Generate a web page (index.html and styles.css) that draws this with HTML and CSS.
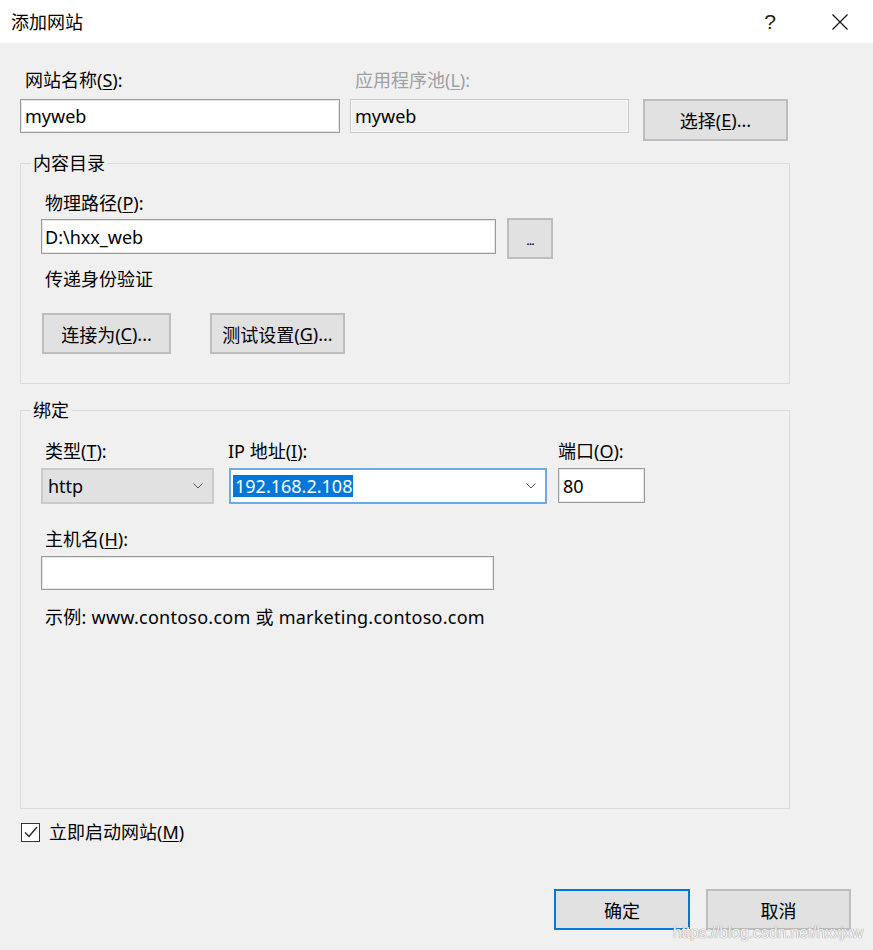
FILE: index.html
```html
<!DOCTYPE html>
<html lang="zh-CN">
<head>
<meta charset="utf-8">
<title>添加网站</title>
<link rel="stylesheet" href="styles.css">
</head>
<body>
<div class="dialog">
  <header class="titlebar">
    <span class="title">添加网站</span>
    <span class="tb-btn help">?</span>
    <span class="tb-btn close">
      <svg width="16" height="16" viewBox="0 0 16 16"><path d="M0.5 0.5L15.5 15.5M15.5 0.5L0.5 15.5" stroke="#111" stroke-width="1.2" fill="none"/></svg>
    </span>
  </header>

  <main class="content">
    <div class="top-grid">
      <label class="lbl lbl-name">网站名称(<u>S</u>):</label>
      <label class="lbl lbl-pool disabled">应用程序池(<u>L</u>):</label>
      <div class="tb w-name">myweb</div>
      <div class="tb readonly w-pool">myweb</div>
      <button class="btn btn-select">选择(<u>E</u>)...</button>
    </div>

    <fieldset class="group group-dir">
      <legend>内容目录</legend>
      <label class="lbl lbl-first">物理路径(<u>P</u>):</label>
      <div class="path-row">
        <div class="tb w-path">D:\hxx_web</div>
        <button class="btn btn-browse">...</button>
      </div>
      <div class="lbl lbl-auth">传递身份验证</div>
      <div class="auth-row">
        <button class="btn btn-connect">连接为(<u>C</u>)...</button>
        <button class="btn btn-test">测试设置(<u>G</u>)...</button>
      </div>
    </fieldset>

    <fieldset class="group group-bind">
      <legend>绑定</legend>
      <div class="bind-grid">
        <label class="lbl">类型(<u>T</u>):</label>
        <label class="lbl lbl-ip">IP 地址(<u>I</u>):</label>
        <label class="lbl lbl-port">端口(<u>O</u>):</label>
        <div class="combo combo-type">
          <span>http</span>
          <svg class="chev" width="10" height="6" viewBox="0 0 10 6"><path d="M0.5 0.5L5 5L9.5 0.5" stroke="#555" stroke-width="1" fill="none"/></svg>
        </div>
        <div class="combo combo-ip">
          <span class="sel">192.168.2.108</span>
          <svg class="chev" width="10" height="6" viewBox="0 0 10 6"><path d="M0.5 0.5L5 5L9.5 0.5" stroke="#555" stroke-width="1" fill="none"/></svg>
        </div>
        <div class="tb w-port">80</div>
      </div>
      <label class="lbl lbl-host">主机名(<u>H</u>):</label>
      <div class="tb w-host"></div>
      <div class="lbl lbl-example">示例: www.contoso.com 或 marketing.contoso.com</div>
    </fieldset>

    <div class="check-row">
      <span class="checkbox">
        <svg width="14" height="12" viewBox="0 0 14 12"><path d="M1 6.5L5 10.5L13 1" stroke="#222" stroke-width="1.3" fill="none"/></svg>
      </span>
      <span class="check-label">立即启动网站(<u>M</u>)</span>
    </div>

    <div class="actions">
      <button class="btn btn-ok">确定</button>
      <button class="btn btn-cancel">取消</button>
    </div>
  </main>

  <div class="watermark">https://blog.csdn.net/hxxjxw</div>
</div>
</body>
</html>
```

FILE: styles.css
```css
* { box-sizing: border-box; }

html, body {
  margin: 0;
  padding: 0;
}

body {
  width: 873px;
  height: 950px;
  overflow: hidden;
  background: #f0f0f0;
  color: #000;
  font-family: "Noto Sans", "Noto Sans CJK SC", sans-serif;
  font-size: 18px;
}

.dialog {
  position: relative;
  width: 873px;
  height: 950px;
}

u {
  text-decoration-thickness: 1px;
  text-underline-offset: 2px;
}

/* title bar */
.titlebar {
  height: 43px;
  background: #fff;
  display: flex;
  align-items: center;
  padding: 0 10px 0 11px;
}

.title {
  flex: 1;
  line-height: 24px;
}

.tb-btn {
  width: 46px;
  height: 43px;
  display: flex;
  align-items: center;
  justify-content: center;
}

.help {
  font-family: "Liberation Sans", sans-serif;
  font-size: 21px;
  color: #222;
  margin-right: 24px;
}

/* content */
.content {
  padding: 25px 22px 0 20px;
}

.lbl {
  display: block;
  line-height: 24px;
  padding-left: 5px;
  white-space: nowrap;
}

.lbl.disabled {
  color: #a0a0a0;
}

.top-grid {
  display: grid;
  grid-template-columns: 320px 279px 145px;
  grid-template-rows: 24px auto;
  column-gap: 10px;
  row-gap: 7px;
  align-items: start;
}

.lbl-name { grid-column: 1; grid-row: 1; }
.lbl-pool { grid-column: 2; grid-row: 1; }
.w-name { grid-column: 1; grid-row: 2; }
.w-pool { grid-column: 2; grid-row: 2; }

.btn-select {
  grid-column: 3;
  grid-row: 2;
  margin-left: 4px;
  width: 145px;
  height: 42px;
}

.tb {
  height: 34px;
  background: #fff;
  border: 1px solid #9b9b9b;
  box-shadow: inset 0 0 0 1px #e6e6e6;
  display: flex;
  align-items: center;
  padding: 0 4px;
  white-space: nowrap;
}

.tb.readonly {
  background: #f0f0f0;
  border-color: #c9c9c9;
  box-shadow: inset 0 0 0 1px #f7f7f7;
}

.btn {
  font: inherit;
  color: #000;
  background: #e1e1e1;
  border: 2px solid #bdbdbd;
  padding: 0;
  display: flex;
  align-items: center;
  justify-content: center;
  white-space: nowrap;
}

/* groups */
.group {
  margin: 10px 0 0 0;
  width: 770px;
  border: 1px solid #dcdcdc;
  padding: 0 20px 29px 20px;
  min-width: 0;
}

.group legend {
  margin-left: -10px;
  padding: 0 2px;
  line-height: 24px;
}

.lbl-first {
  margin-top: 16px;
  padding-left: 4px;
}

.path-row {
  display: flex;
  align-items: flex-start;
  gap: 11px;
  margin-top: 4px;
}

.w-path {
  width: 455px;
  height: 35px;
  padding-left: 3px;
}

.btn-browse {
  width: 46px;
  height: 41px;
  margin-top: -1px;
  font-size: 13px;
  letter-spacing: -1px;
  padding-top: 2px;
}

.lbl-auth {
  margin-top: 8px;
  padding-left: 4px;
}

.auth-row {
  display: flex;
  gap: 39px;
  margin-top: 22px;
  padding-left: 1px;
}

.btn-connect {
  width: 129px;
  height: 41px;
}

.btn-test {
  width: 135px;
  height: 41px;
}

.group-bind {
  margin-top: 14px;
  padding-bottom: 179px;
}

.bind-grid {
  display: grid;
  grid-template-columns: 173px 318px 87px;
  column-gap: 15px;
  row-gap: 5px;
  margin-top: 17px;
  align-items: start;
}

.bind-grid .lbl { padding-left: 4px; }
.bind-grid .lbl-ip { padding-left: 0; margin-left: -1px; }
.bind-grid .lbl-port { padding-left: 0; margin-left: -4px; }

.combo {
  height: 36px;
  display: flex;
  align-items: center;
  justify-content: space-between;
  white-space: nowrap;
}

.combo-type {
  background: #e1e1e1;
  border: 2px solid #cacaca;
  padding: 0 9px 0 5px;
}

.combo-ip {
  background: #fff;
  border: 2px solid #6eaae6;
  padding: 0 9px 0 2px;
}

.sel {
  background: #0078d7;
  color: #fff;
  line-height: 22px;
  padding: 0 1px 0 2px;
}

.chev { display: block; }

.w-port {
  width: 87px;
  height: 35px;
  margin-left: -4px;
  padding-left: 4px;
}

.lbl-host {
  margin-top: 23px;
  padding-left: 4px;
}

.w-host {
  width: 453px;
  margin-top: 5px;
}

.lbl-example {
  margin-top: 15px;
  padding-left: 4px;
  letter-spacing: 0.25px;
}

/* checkbox */
.check-row {
  display: flex;
  align-items: center;
  margin-top: 11px;
  height: 24px;
}

.checkbox {
  width: 19px;
  height: 19px;
  border: 1.5px solid #333;
  background: #fff;
  display: flex;
  align-items: center;
  justify-content: center;
  margin-left: 1px;
}

.check-label {
  margin-left: 9px;
  line-height: 24px;
}

/* actions */
.actions {
  display: flex;
  justify-content: flex-end;
  gap: 16px;
  margin-top: 45px;
}

.btn-ok {
  width: 136px;
  height: 41px;
  border-color: #0078d7;
}

.btn-cancel {
  width: 145px;
  height: 41px;
}

.watermark {
  position: absolute;
  right: 10px;
  bottom: 10px;
  font-family: "Liberation Sans", sans-serif;
  font-size: 16px;
  line-height: 14px;
  color: #f4f4f4;
  text-shadow: 0 0 1px #9a9a9a, 0 0 1px #9a9a9a;
  letter-spacing: -0.2px;
}
```
